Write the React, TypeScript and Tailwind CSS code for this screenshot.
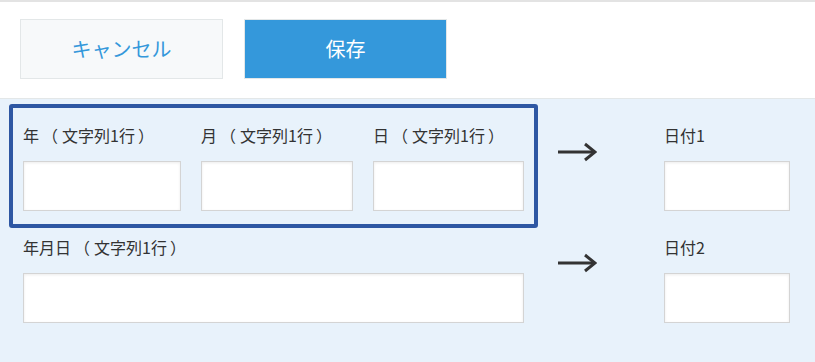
import React from 'react';

const font = { fontFamily: '"Noto Sans CJK JP", "Noto Sans", sans-serif' };

const Arrow: React.FC<{ className?: string }> = ({ className }) => (
    <svg width="40" height="20" viewBox="0 0 40 20" className={className}>
        <path d="M1 10 H38" stroke="#333" strokeWidth="3" fill="none" />
        <path d="M28 2 L38 10 L28 18" stroke="#333" strokeWidth="3" fill="none" strokeLinejoin="miter" />
    </svg>
);

const Label: React.FC<{ text: string }> = ({ text }) => {
    const m = text.match(/^(.*)（(.*)）$/);
    if (!m) return <>{text}</>;
    return (
        <>
            {m[1]}
            <span className="pl-[3px] pr-[4px]">（</span>
            {m[2]}
            <span className="pl-[3px] pr-[3px]">）</span>
        </>
    );
};

const Field: React.FC<{ label: string; width: string }> = ({ label, width }) => (
    <div className={`flex flex-col ${width}`}>
        <label className="text-[16px] leading-[20px] text-[#333] whitespace-nowrap">
            <Label text={label} />
        </label>
        <input
            type="text"
            className="mt-[16px] h-[50px] w-full bg-white border border-[#d4d4d4] shadow-[inset_0_1px_3px_rgba(0,0,0,0.08)] outline-none"
        />
    </div>
);

export default function App() {
    return (
        <div className="w-[815px] h-[362px] bg-white flex flex-col overflow-hidden" style={font}>
            {/* Toolbar */}
            <div className="h-[98px] shrink-0 border-t-2 border-[#e3e3e3] flex items-start gap-[21px] pl-[20px] pt-[17px]">
                <button className="w-[203px] h-[60px] bg-[#f7f9fa] border border-[#e3e7e8] text-[#3498db] text-[20px]">
                    キャンセル
                </button>
                <button className="w-[203px] h-[60px] bg-[#3498db] border border-[#e3e7e8] text-white text-[20px]">
                    保存
                </button>
            </div>

            {/* Form */}
            <div className="flex-1 bg-[#e8f2fb] border-t border-[#e3e7e8]">
                <div className="flex items-start mt-[5px]">
                    <div className="ml-[9px] w-[529px] h-[124px] border-4 border-[#2e57a3] rounded-[3px] flex gap-[20px] pl-[10px] pt-[17px]">
                        <Field label="年（文字列1行）" width="w-[158px]" />
                        <Field label="月（文字列1行）" width="w-[152px]" />
                        <Field label="日（文字列1行）" width="w-[151px]" />
                    </div>
                    <Arrow className="ml-[19px] mt-[38px]" />
                    <div className="ml-[67px] mt-[21px]">
                        <Field label="日付1" width="w-[126px]" />
                    </div>
                </div>
                <div className="flex items-start mt-[9px] pl-[23px]">
                    <Field label="年月日（文字列1行）" width="w-[501px]" />
                    <Arrow className="ml-[33px] mt-[16px]" />
                    <div className="ml-[67px]">
                        <Field label="日付2" width="w-[126px]" />
                    </div>
                </div>
            </div>
        </div>
    );
}
